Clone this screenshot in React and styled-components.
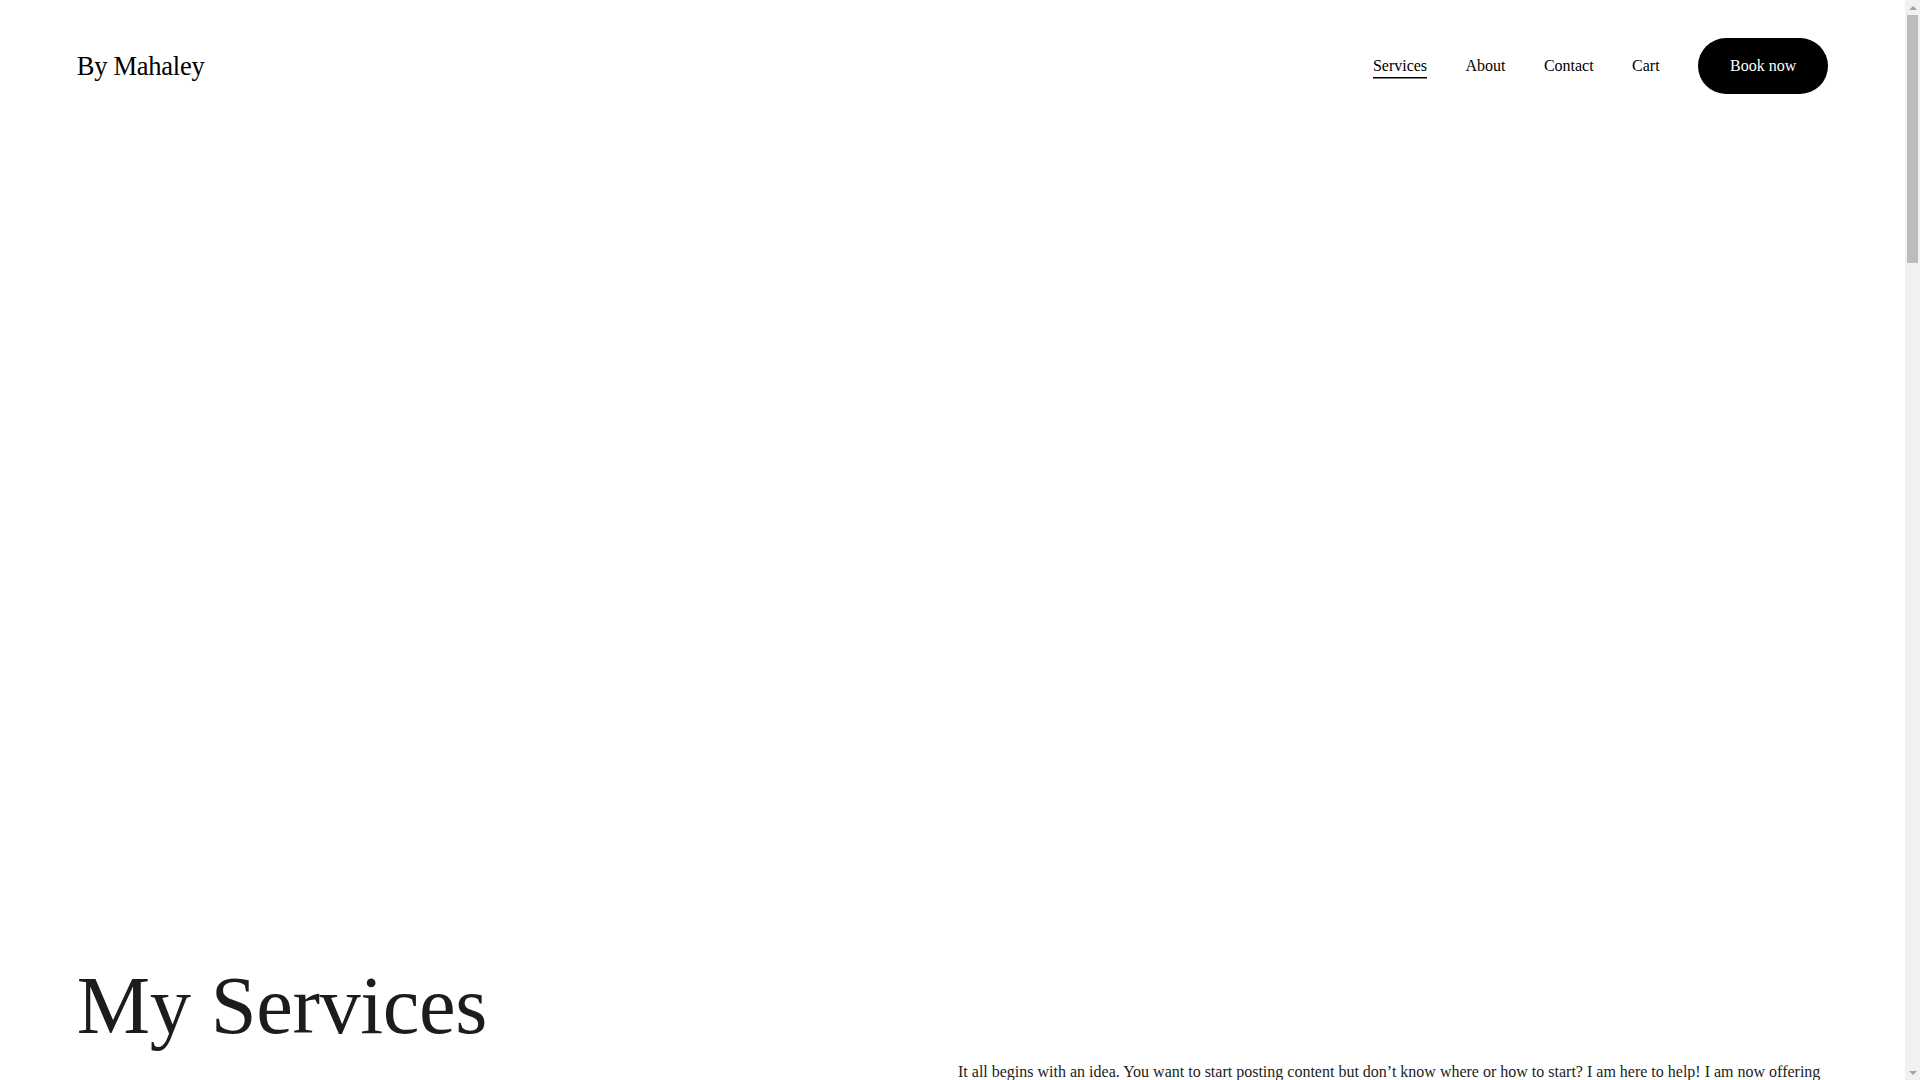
import React from 'react';
import styled, { createGlobalStyle } from 'styled-components';

const GlobalStyle = createGlobalStyle`
  html, body {
    margin: 0;
    padding: 0;
    background: #ffffff;
    overflow: hidden;
  }
  body {
    font-family: "Liberation Serif", "Times New Roman", serif;
    color: #000000;
    -webkit-font-smoothing: antialiased;
  }
  * {
    box-sizing: border-box;
  }
`;

const navItems = [
  { label: 'Services', active: true },
  { label: 'About' },
  { label: 'Contact' },
  { label: 'Cart' },
];

const Frame = styled.div`
  display: flex;
  height: 100vh;
  overflow: hidden;
`;

const Content = styled.div`
  flex: 1;
  min-width: 0;
  overflow: hidden;
`;

const Rail = styled.div`
  width: 15px;
  flex: none;
  display: flex;
  flex-direction: column;
  background: #f1f1f1;
`;

const RailButton = styled.div`
  height: 15px;
  display: flex;
  align-items: center;
  justify-content: center;

  &::before {
    content: '';
    width: 0;
    height: 0;
    border-left: 4px solid transparent;
    border-right: 4px solid transparent;
    ${({ $down }) =>
      $down
        ? 'border-top: 4px solid #a3a3a3;'
        : 'border-bottom: 4px solid #a3a3a3;'}
  }
`;

const Track = styled.div`
  flex: 1;
  display: flex;
  flex-direction: column;
  padding: 0 2px;
`;

const Thumb = styled.div`
  height: 248px;
  background: #bcbcbc;
`;

const Header = styled.header`
  display: flex;
  align-items: center;
  justify-content: space-between;
  padding: 38px 4vw 38px;
`;

const Logo = styled.a`
  font-size: 26.5px;
  line-height: 1.2;
  color: #000;
  text-decoration: none;
  letter-spacing: -0.01em;
  margin-top: 1px;
`;

const Nav = styled.nav`
  display: flex;
  align-items: center;
  gap: 2vw;
`;

const NavLink = styled.a`
  display: inline-block;
  font-size: 16px;
  line-height: 1.8;
  color: #000;
  text-decoration: none;
  margin-top: 1px;
  background-image: ${({ $active }) =>
    $active ? 'linear-gradient(#000, #000)' : 'none'};
  background-repeat: no-repeat;
  background-size: 100% 1.5px;
  background-position: 0 calc(100% - 2px);
`;

const BookButton = styled.a`
  display: inline-flex;
  align-items: center;
  justify-content: center;
  height: 56px;
  padding: 0 32px;
  border-radius: 300px;
  background: #000;
  color: #fff;
  font-size: 16px;
  text-decoration: none;
`;

const Intro = styled.section`
  display: grid;
  grid-template-columns: 1fr 1fr;
  column-gap: 11px;
  padding: 0 4vw;
  margin-top: 824px;
`;

const Title = styled.h1`
  grid-column: 1;
  grid-row: 1;
  margin: 0;
  font-size: 82.5px;
  font-weight: 400;
  line-height: 1.2;
  color: #1c1c1c;
  letter-spacing: -0.005em;
`;

const Lead = styled.p`
  grid-column: 2;
  grid-row: 2;
  margin: 3px 0 0;
  font-size: 16px;
  line-height: 1.8;
  color: #1c1c1c;
`;

export default function App() {
  return (
    <>
      <GlobalStyle />
      <Frame>
        <Content>
          <Header>
            <Logo href="#">By Mahaley</Logo>
            <Nav>
              {navItems.map((item) => (
                <NavLink key={item.label} href="#" $active={item.active}>
                  {item.label}
                </NavLink>
              ))}
              <BookButton href="#">Book now</BookButton>
            </Nav>
          </Header>
          <Intro>
            <Title>My Services</Title>
            <Lead>
              It all begins with an idea. You want to start posting content but
              don’t know where or how to start? I am here to help! I am now
              offering social media management, content creation and brand
              strategy for small businesses and creators who want to grow online.
            </Lead>
          </Intro>
        </Content>
        <Rail aria-hidden="true">
          <RailButton />
          <Track>
            <Thumb />
          </Track>
          <RailButton $down />
        </Rail>
      </Frame>
    </>
  );
}
